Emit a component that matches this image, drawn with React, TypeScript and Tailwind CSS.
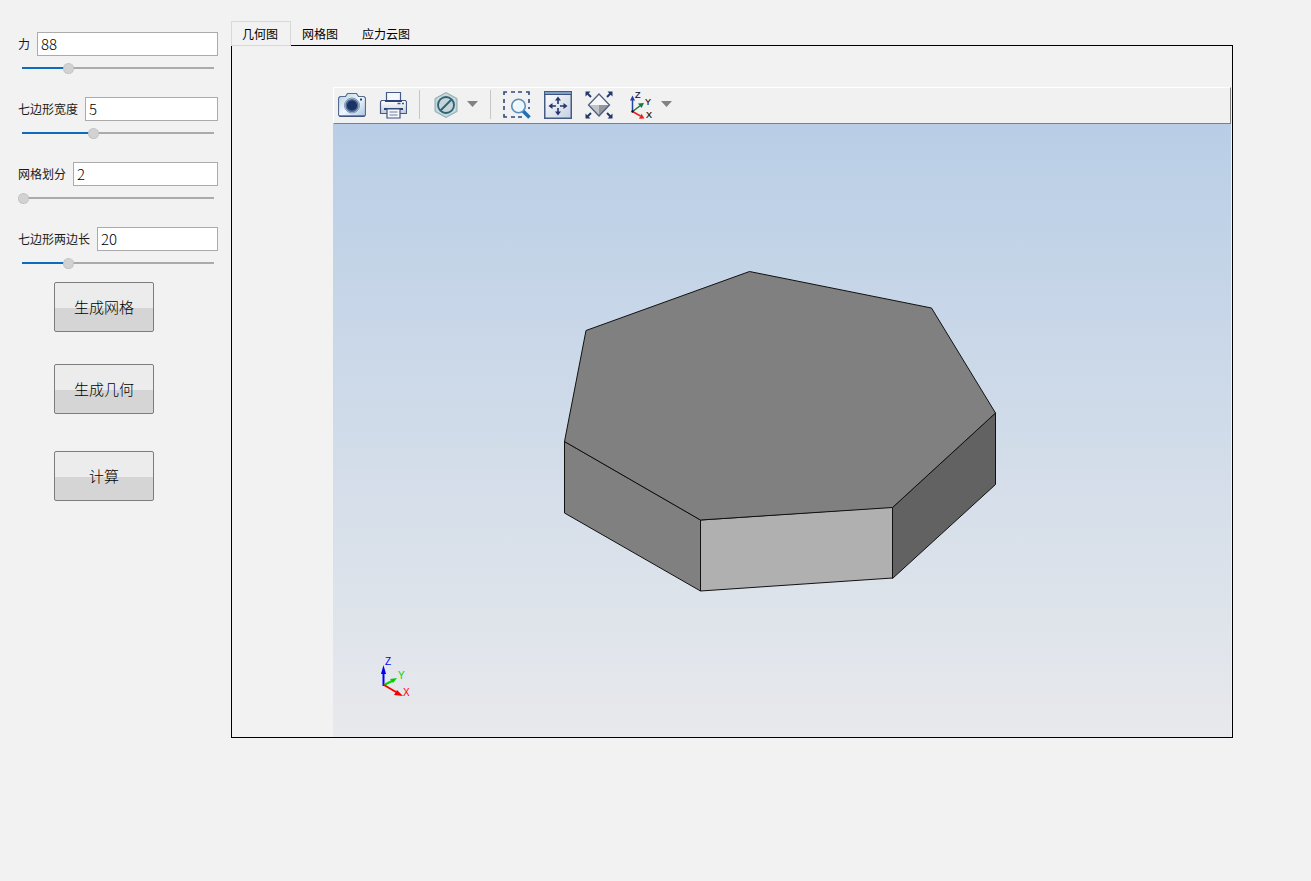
import { useState } from "react";
import clsx from "clsx";

const PARAMS = [
  { id: "force", label: "力", value: "88", position: 24 },
  { id: "width", label: "七边形宽度", value: "5", position: 37 },
  { id: "mesh", label: "网格划分", value: "2", position: 0 },
  { id: "sides", label: "七边形两边长", value: "20", position: 24 },
];

const TABS = ["几何图", "网格图", "应力云图"];

function ParamField({ id, label, value, position }: (typeof PARAMS)[number]) {
  const [pos, setPos] = useState(position);

  return (
    <div className="flex flex-col gap-[6px]">
      <div className="flex items-center gap-[7px]">
        <label htmlFor={id} className="shrink-0 text-[12px] leading-4 text-[#1a1a1a]">{label}</label>
        <input
          id={id}
          type="text"
          defaultValue={value}
          className="h-6 w-full min-w-0 border border-[#ababab] bg-white px-[3px] pb-[2px] text-[15px] font-light leading-5 text-black outline-none"
        />
      </div>
      <input
        type="range"
        aria-label={label}
        min={0}
        max={100}
        value={pos}
        onChange={(e) => setPos(Number(e.target.value))}
        style={{ backgroundImage: `linear-gradient(to right, #0f6cbd ${pos}%, #ababab ${pos}%)` }}
        className="h-3 w-full appearance-none bg-[length:calc(100%-8px)_2px] bg-center bg-no-repeat [&::-webkit-slider-thumb]:h-[11px] [&::-webkit-slider-thumb]:w-[11px] [&::-webkit-slider-thumb]:appearance-none [&::-webkit-slider-thumb]:rounded-full [&::-webkit-slider-thumb]:border [&::-webkit-slider-thumb]:border-dotted [&::-webkit-slider-thumb]:border-[#b4b4b4] [&::-webkit-slider-thumb]:bg-[#d2d2d2]"
      />
    </div>
  );
}

function PushButton({ children }: { children: string }) {
  return (
    <button
      type="button"
      className="h-[50px] w-[100px] rounded-[2px] border border-[#7d7d7d] bg-linear-to-b from-[#ececec] from-52% to-[#d5d5d5] to-52% text-[15px] font-light text-black"
    >
      {children}
    </button>
  );
}

function CameraIcon() {
  return (
    <svg viewBox="0 0 28 28" className="size-7">
      <defs>
        <linearGradient id="cam" x1="0" y1="0" x2="1" y2="1">
          <stop offset="0" stopColor="#b5cce2" />
          <stop offset=".5" stopColor="#f1f8fd" />
          <stop offset="1" stopColor="#a9c4de" />
        </linearGradient>
      </defs>
      <path d="M2 5.500h5.500l2-3h9l2 3H26l1.500 1.500v17L26 25.500H2L.5 24V7z" fill="url(#cam)" stroke="#566b90" strokeWidth="1.200" />
      <path d="M1.500 25h25" stroke="#33497a" strokeWidth="1.200" />
      <circle cx="14" cy="14.500" r="7.500" fill="#b9cde0" stroke="#7d95b5" />
      <circle cx="14" cy="14.500" r="5.800" fill="#1b3263" stroke="#4c6a95" strokeWidth="1.500" />
      <path d="M22 8.500h2" stroke="#2c4378" strokeWidth="2" />
    </svg>
  );
}

function PrinterIcon() {
  return (
    <svg viewBox="0 0 28 28" className="size-7">
      <defs>
        <linearGradient id="prn" x1="0" y1="0" x2="0" y2="1">
          <stop offset="0" stopColor="#fff" />
          <stop offset="1" stopColor="#c3cbd9" />
        </linearGradient>
      </defs>
      <path d="M7.500 10V1.500h14V10" fill="#f4f8fc" stroke="#465b86" strokeWidth="1.200" />
      <path d="M2.500 9.500h24l1 1.500v11.500h-26V11z" fill="url(#prn)" stroke="#465b86" strokeWidth="1.200" />
      <path d="M6 9h17v2H6z" fill="#2c4378" />
      <path d="M18.500 12.500h3M23 12.500h2" stroke="#3f5888" strokeWidth="1.300" />
      <path d="M5 18h19" stroke="#2c4378" strokeWidth="2" />
      <path d="M8 18h13v9H8z" fill="#f6f9fc" stroke="#3d527f" strokeWidth="1.200" />
      <path d="M10.500 21h8M10.500 24h8" stroke="#6d7f9f" strokeWidth="1.200" />
    </svg>
  );
}

function HexagonIcon() {
  return (
    <svg viewBox="0 0 28 28" className="size-7">
      <path d="M14 1.500 25 7.500v13L14 26.500 3 20.500v-13z" fill="#b7cdd0" stroke="#93adb3" />
      <path d="M14 3.500 23 8.500v11L14 24.500 5 19.500v-11z" fill="none" stroke="#d6e3e5" />
      <circle cx="14" cy="14" r="8" fill="#c5d5d9" stroke="#2f6377" strokeWidth="1.800" />
      <path d="M8.500 19.500 19.500 8.500" stroke="#2f6377" strokeWidth="2" />
    </svg>
  );
}

function ZoomAreaIcon() {
  return (
    <svg viewBox="0 0 28 28" className="size-7" fill="none">
      <path
        d="M1 4V1h3M8 1h4M15 1h4M23 1h3v3M26 8v4M1 8v4M1 15v4M1 23v3h3M8 26h4M15 26h4M26 16v2"
        stroke="#33487a"
        strokeWidth="1.600"
      />
      <path d="m20 20 6.500 6.500" stroke="#1f6fb2" strokeWidth="3.600" />
      <circle cx="15.500" cy="15" r="6.800" fill="#edf6fc" stroke="#5b8fba" strokeWidth="1.600" />
      <path d="M11.500 15a4 4 0 0 1 4-4" stroke="#fff" strokeWidth="1.500" />
    </svg>
  );
}

function FitIcon() {
  return (
    <svg viewBox="0 0 28 28" className="size-7">
      <defs>
        <linearGradient id="fit" x1="0" y1="0" x2="1" y2="1">
          <stop offset="0" stopColor="#fff" />
          <stop offset="1" stopColor="#c6d1e1" />
        </linearGradient>
      </defs>
      <path d="M.75.75h26.500v26.500H.75z" fill="url(#fit)" stroke="#465b86" strokeWidth="1.500" />
      <path d="M1 1h26v2H1z" fill="#7ba0c6" />
      <path d="M0 3.500h28" stroke="#3d527f" />
      <path d="M14 8v5M14 17v5M7 15h5M16 15h5" stroke="#22386b" strokeWidth="1.600" />
      <path d="m14 5.500 3 4h-6zM14 24.500l3-4h-6zM4.500 15l4-3v6zM23.500 15l-4-3v6z" fill="#22386b" />
    </svg>
  );
}

function DiamondIcon() {
  return (
    <svg viewBox="0 0 28 28" className="size-7">
      <path d="m2 2 4 4M26 2l-4 4M2 26l4-4M26 26l-4-4" stroke="#22386b" strokeWidth="2" />
      <path d="M.5.500h5L.5 5.500zM27.500.500h-5l5 5zM.5 27.500h5l-5-5zM27.500 27.500h-5l5-5z" fill="#22386b" />
      <path d="M14 3 24.500 14h-21z" fill="#f5f6f7" />
      <path d="M3.500 14H14v11z" fill="#c0c4c9" />
      <path d="M24.500 14H14v11z" fill="#94989e" />
      <path d="M14 3 24.500 14 14 25 3.500 14z" fill="none" stroke="#4f5f7e" strokeWidth="1.300" />
    </svg>
  );
}

function AxesIcon() {
  return (
    <svg viewBox="0 0 28 28" className="size-7">
      <path d="M6.500 20.500V8" stroke="#2441a5" strokeWidth="1.500" />
      <path d="M6.500 4.500 9 9.500H4z" fill="#2441a5" />
      <path d="m6.500 20.500 8-6" stroke="#157a3a" strokeWidth="1.500" />
      <path d="m18 12-2.500 5-3.500-4.500z" fill="#157a3a" />
      <path d="m6.500 20.500 8 4.500" stroke="#e8231f" strokeWidth="1.500" />
      <path d="m18.500 27.500-5.500.2 2.500-5z" fill="#e8231f" />
      <circle cx="6.500" cy="20.500" r="1.200" fill="#111" />
      <g fontFamily="Liberation Sans, sans-serif" fontSize="9" fill="#111" stroke="#111" strokeWidth=".2">
        <text x="9" y="6.500">Z</text>
        <text x="19" y="14">Y</text>
        <text x="20" y="27">X</text>
      </g>
    </svg>
  );
}

function DropArrow({ label }: { label: string }) {
  return (
    <button type="button" aria-label={label} className="flex h-7 w-3 items-center justify-center">
      <svg viewBox="0 0 12 6" className="h-[6px] w-3">
        <path d="M1 0h11L6.500 6z" fill="#828282" />
      </svg>
    </button>
  );
}

function Toolbar() {
  return (
    <div className="flex border border-t-white border-r-[#808080] border-b-[#808080] border-l-white bg-[#f1f1f1] pt-[2px] pb-1 pl-1">
      <div className="flex h-[29px] gap-[13px] border-r border-[#c6c6c6] pr-3">
        <button type="button" aria-label="截图"><CameraIcon /></button>
        <button type="button" aria-label="打印"><PrinterIcon /></button>
      </div>
      <div className="flex h-[29px] gap-[6px] border-r border-[#c6c6c6] px-3">
        <button type="button" aria-label="选择"><HexagonIcon /></button>
        <DropArrow label="选择选项" />
      </div>
      <div className="flex h-[29px] gap-[13px] pl-3">
        <button type="button" aria-label="缩放框"><ZoomAreaIcon /></button>
        <button type="button" aria-label="适应窗口"><FitIcon /></button>
        <button type="button" aria-label="缩放选定"><DiamondIcon /></button>
        <div className="flex gap-[6px]">
          <button type="button" aria-label="视图方向"><AxesIcon /></button>
          <DropArrow label="视图选项" />
        </div>
      </div>
    </div>
  );
}

function Viewport() {
  return (
    <svg viewBox="0 0 898 613" className="block w-full bg-linear-to-b from-[#b9cee6] to-[#e8e9ec]">
      <g stroke="#111" strokeWidth="1" strokeLinejoin="round">
        <path d="M231.500 317.500v71.500l136 78v-71z" fill="#808080" />
        <path d="M367.500 396v71l192-13v-71z" fill="#b0b0b0" />
        <path d="M559.500 383.500v71l103-94v-71.500z" fill="#626262" />
        <path d="M416.500 147.500 598.500 184l64 105-103 94.500-192 12.500-136-78.500L253 206.500z" fill="#808080" />
      </g>
      <g strokeWidth="2">
        <path d="M50.500 562v-14" stroke="#0000ff" />
        <path d="m50.500 541 2.500 9h-5z" fill="#0000e0" />
        <path d="m51 561 8-4" stroke="#00d800" />
        <path d="m64 554-4 5-3-4z" fill="#00d000" />
        <path d="m51 561 12 7" stroke="#ff0000" />
        <path d="m70 572-9-1 3-5z" fill="#f00000" />
      </g>
      <g fontFamily="Liberation Sans, sans-serif" fontSize="10">
        <text x="52" y="541" fill="#0000ff">Z</text>
        <text x="65" y="555" fill="#00d800">Y</text>
        <text x="70" y="572" fill="#ff0000">X</text>
      </g>
    </svg>
  );
}

export default function App() {
  const [tab, setTab] = useState(TABS[0]);

  return (
    <div lang="zh-CN" className="flex min-h-screen items-start bg-[#f2f2f2] pr-[78px] font-['Noto_Sans_CJK_SC',sans-serif]">
      <aside className="flex w-[231px] shrink-0 flex-col pt-8 pr-[13px] pl-[18px]">
        <div className="flex flex-col gap-[23px]">
          {PARAMS.map((p) => (
            <ParamField key={p.id} {...p} />
          ))}
        </div>
        <div className="flex flex-col items-start pt-[13px] pl-9">
          <PushButton>生成网格</PushButton>
          <div className="pt-8 pb-[37px]">
            <PushButton>生成几何</PushButton>
          </div>
          <PushButton>计算</PushButton>
        </div>
      </aside>
      <main className="min-w-0 flex-1 pt-[21px]">
        <div role="tablist" className="flex">
          {TABS.map((t) => (
            <button
              key={t}
              type="button"
              role="tab"
              aria-selected={t === tab}
              onClick={() => setTab(t)}
              className={clsx(
                "h-[25px] border pr-3 pl-[10px] text-[12px] leading-4 text-black",
                t === tab ? "z-10 -mb-px border-[#d9d9d9] bg-[#f2f2f2]" : "border-transparent",
              )}
            >
              {t}
            </button>
          ))}
        </div>
        <div role="tabpanel" className="-mt-px border border-black pt-[41px] pr-px pl-[101px]">
          <Toolbar />
          <Viewport />
        </div>
      </main>
    </div>
  );
}
